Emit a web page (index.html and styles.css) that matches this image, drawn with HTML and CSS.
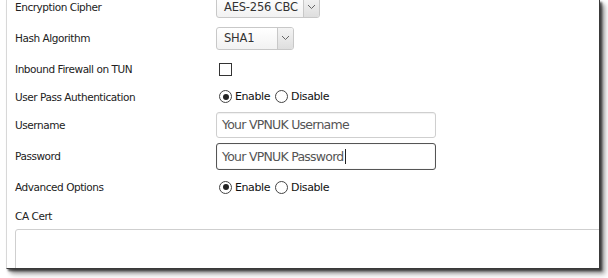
FILE: index.html
```html
<!DOCTYPE html>
<html>
<head>
<meta charset="utf-8">
<link rel="stylesheet" href="styles.css">
</head>
<body>
<div class="panel">
  <div class="form">
    <div class="row r1">
      <div class="label">Encryption Cipher</div>
      <div class="select w-aes"><span class="sel-text">AES-256 CBC</span><span class="sel-btn"><svg width="9" height="6" viewBox="0 0 9 6"><path d="M1 1 L4.5 4.5 L8 1" fill="none" stroke="#666" stroke-width="1"/></svg></span></div>
    </div>
    <div class="row r2">
      <div class="label">Hash Algorithm</div>
      <div class="select w-sha"><span class="sel-text">SHA1</span><span class="sel-btn"><svg width="9" height="6" viewBox="0 0 9 6"><path d="M1 1 L4.5 4.5 L8 1" fill="none" stroke="#666" stroke-width="1"/></svg></span></div>
    </div>
    <div class="row r3">
      <div class="label">Inbound Firewall on TUN</div>
      <span class="checkbox"></span>
    </div>
    <div class="row r4">
      <div class="label">User Pass Authentication</div>
      <div class="radios"><span class="radio on"></span><span class="rlabel">Enable</span><span class="radio"></span><span class="rlabel">Disable</span></div>
    </div>
    <div class="row r5">
      <div class="label">Username</div>
      <div class="input">Your VPNUK Username</div>
    </div>
    <div class="row r6">
      <div class="label">Password</div>
      <div class="input focus">Your VPNUK Password<span class="caret"></span></div>
    </div>
    <div class="row r7">
      <div class="label">Advanced Options</div>
      <div class="radios"><span class="radio on"></span><span class="rlabel">Enable</span><span class="radio"></span><span class="rlabel">Disable</span></div>
    </div>
    <div class="row r8">
      <div class="label">CA Cert</div>
    </div>
    <div class="textarea"></div>
  </div>
</div>
</body>
</html>
```
FILE: styles.css
```css
html, body {
  margin: 0;
  padding: 0;
  background: #ffffff;
  overflow: hidden;
}
body {
  width: 608px;
  height: 278px;
  font-family: "DejaVu Sans", "Liberation Sans", sans-serif;
  color: #222;
}
.panel {
  margin-left: 6px;
  width: 592px;
  height: 268px;
  background: #fff;
  border-left: 1px solid #d8d8d8;
  border-right: 1px solid #3a3a3a;
  border-bottom: 1px solid #3a3a3a;
  box-shadow: 2px 2px 2px rgba(0,0,0,0.6), 4px 4px 4px rgba(0,0,0,0.35), 6px 6px 6px rgba(0,0,0,0.15);
  overflow: hidden;
  position: relative;
}
.form {
  margin-top: -8px;
  padding-left: 8px;
  display: flex;
  flex-direction: column;
}
.row {
  display: flex;
  align-items: center;
}
.r1 { height: 30px; }
.r2 { height: 32px; }
.r3 { height: 30px; }
.r4 { height: 25px; }
.r5 { height: 31px; }
.r6 { height: 32px; }
.r7 { height: 30px; }
.r8 { height: 27px; }
.label {
  width: 201px;
  flex: none;
  font-size: 10.5px;
  letter-spacing: -0.45px;
  color: #222;
}
.select {
  display: flex;
  align-items: stretch;
  height: 22px;
  border: 1px solid #c8c8c8;
  border-radius: 3px;
  background: linear-gradient(#ffffff, #f2f2f2);
  box-sizing: border-box;
  font-size: 11.5px;
  letter-spacing: -0.2px;
  color: #333;
  white-space: nowrap;
}
.w-aes { width: 104px; height: 22px; }
.w-sha { width: 78px; height: 23px; }
.sel-text {
  flex: 1;
  display: flex;
  align-items: center;
  padding-left: 7px;
}
.sel-btn {
  width: 15px;
  flex: none;
  display: flex;
  align-items: center;
  justify-content: center;
  border-left: 1px solid #c8c8c8;
  background: linear-gradient(#f4f4f4, #dedede);
  border-radius: 0 2px 2px 0;
}
.checkbox {
  margin-left: 3px;
  width: 11px;
  height: 11px;
  border: 1px solid #333;
  background: #fff;
}
.radios {
  display: flex;
  align-items: center;
  margin-left: 3px;
  font-size: 11px;
  letter-spacing: -0.4px;
  color: #111;
}
.radio {
  width: 11px;
  height: 11px;
  border: 1px solid #444;
  border-radius: 50%;
  background: #fff;
  position: relative;
  box-sizing: content-box;
}
.radio.on::after {
  content: "";
  position: absolute;
  left: 2.5px;
  top: 2.5px;
  width: 6px;
  height: 6px;
  border-radius: 50%;
  background: #222;
}
.rlabel { margin-left: 3px; margin-right: 5px; }
.input {
  width: 220px;
  height: 26px;
  box-sizing: border-box;
  border: 1px solid #cfcfcf;
  border-radius: 3px;
  padding-left: 5px;
  display: flex;
  align-items: center;
  font-size: 12.5px;
  letter-spacing: -0.75px;
  color: #555;
  white-space: nowrap;
  box-shadow: inset 0 1px 1px rgba(0,0,0,0.06);
}
.input.focus {
  height: 27px;
  border: 1px solid #555;
  box-shadow: inset 0 0 1px rgba(0,0,0,0.3);
}
.caret {
  display: inline-block;
  width: 1px;
  height: 15px;
  background: #222;
  margin-left: 1px;
}
.textarea {
  height: 60px;
  margin-right: -10px;
  border: 1px solid #cfcfcf;
  border-radius: 3px 0 0 0;
}
```
